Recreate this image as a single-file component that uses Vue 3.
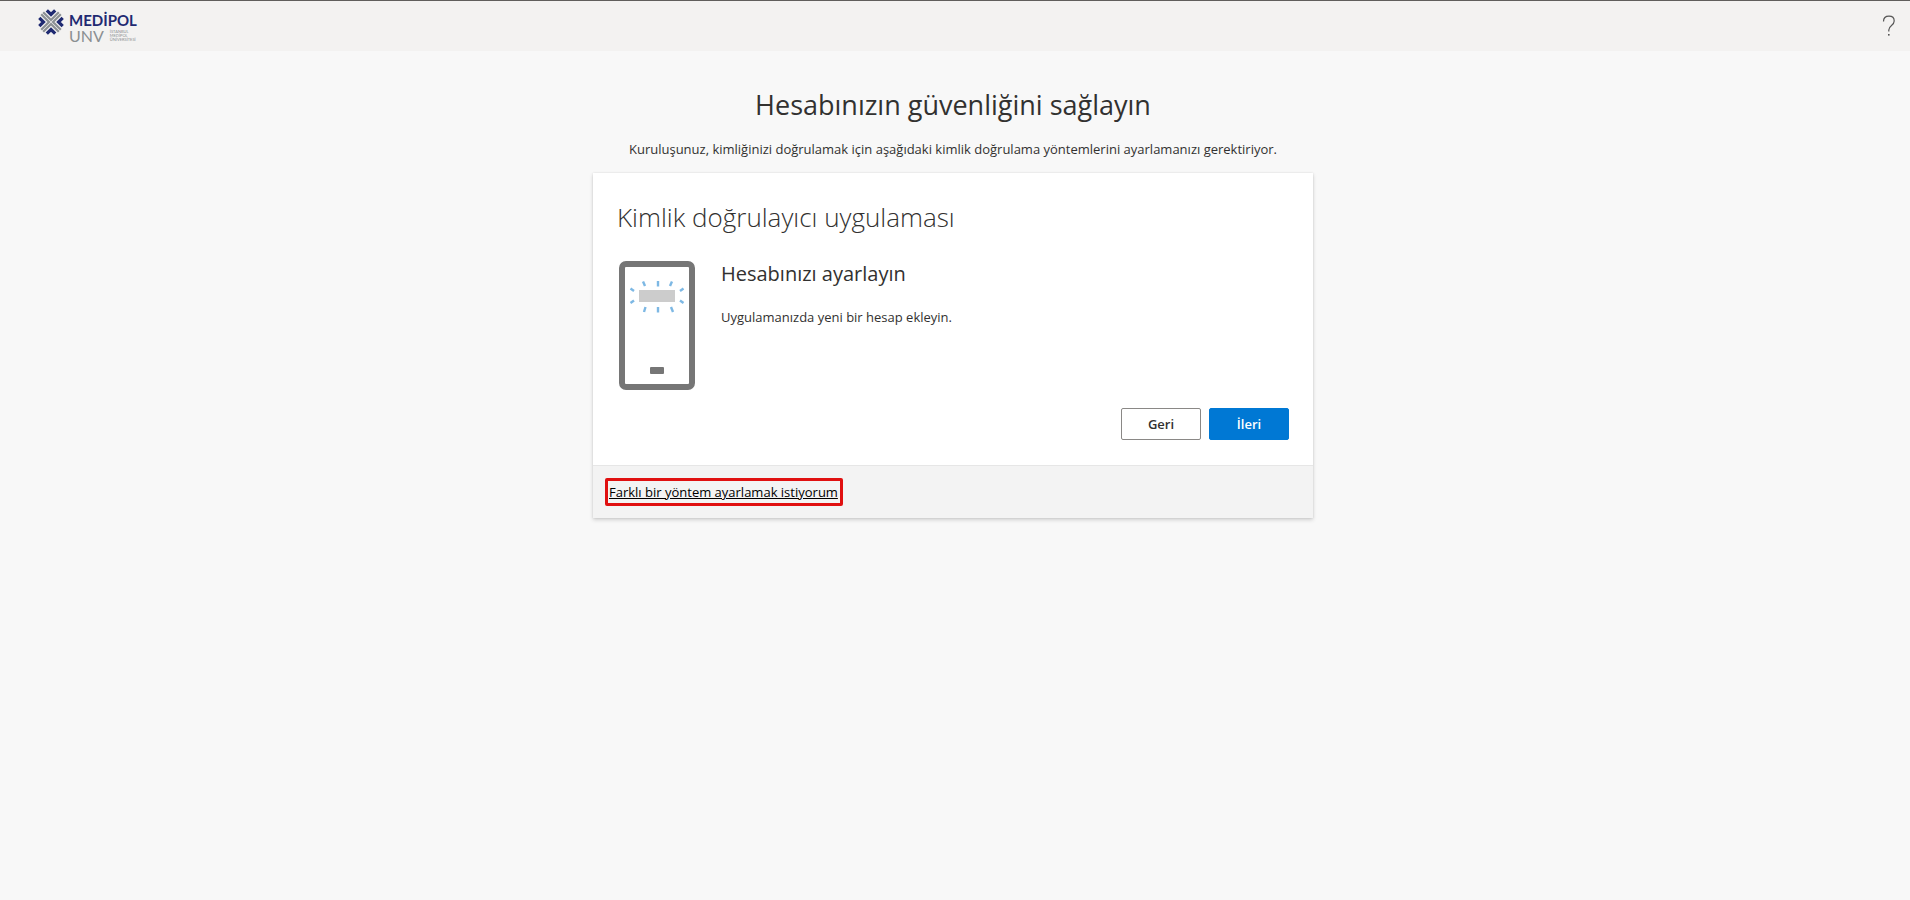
<script setup>
const quadrants = [0, 90, 180, 270]
const rays = [
  'M25 21.500l2 4.500', 'M40 21v5.500', 'M54 21.500l-2 4.500',
  'M12.500 28.500l3.500 2.500', 'M65.500 28.500l-3.500 2.500',
  'M12.500 43l3.500-2.500', 'M65.500 43l-3.500-2.500',
  'M26 52l1.500-5', 'M40 52.500v-5.500', 'M55 52l-2-5',
]
</script>

<template>
  <div class="page">
    <header class="topbar">
      <div class="brand">
        <svg class="emblem" viewBox="0 0 26 26" aria-hidden="true">
          <g v-for="a in quadrants" :key="a" :transform="`rotate(${a} 13 13)`" fill="none">
            <path d="M5.200 3.200L13 11L20.800 3.200" stroke="#8b9094" stroke-width="2.200" />
            <path d="M8.800 1.300L13 5.500L17.200 1.300" stroke="#1f2a72" stroke-width="3.200" />
          </g>
        </svg>
        <div class="wordmark">
          <span class="name">MEDİPOL</span>
          <div class="second">
            <span class="unv">UNV</span>
            <span class="tiny">İSTANBUL<br />MEDİPOL<br />ÜNİVERSİTESİ</span>
          </div>
        </div>
      </div>
      <button class="help" type="button" aria-label="Yardım">
        <svg viewBox="0 0 14 22" aria-hidden="true">
          <path d="M1.500 6.500C1.500 3 4 1.200 7 1.200S12.200 3 12.200 6C12.200 10.500 6.800 10.500 6.800 15V16.500" fill="none" stroke="#555" stroke-width="1.200" />
          <rect x="6" y="19" width="1.600" height="1.600" fill="#555" />
        </svg>
      </button>
    </header>

    <main class="content">
      <h1>Hesabınızın güvenliğini sağlayın</h1>
      <p class="lead">Kuruluşunuz, kimliğinizi doğrulamak için aşağıdaki kimlik doğrulama yöntemlerini ayarlamanızı gerektiriyor.</p>
      <section class="card">
        <div class="body">
          <h2>Kimlik doğrulayıcı uygulaması</h2>
          <div class="step">
            <svg class="phone" viewBox="0 0 78 130" aria-hidden="true">
              <rect x="4" y="4" width="70" height="123" rx="4" fill="#fff" stroke="#767676" stroke-width="6" />
              <rect x="21" y="30" width="36" height="12" fill="#ccc" />
              <rect x="32" y="107" width="14" height="7" rx="1" fill="#767676" />
              <path v-for="r in rays" :key="r" :d="r" stroke="#7db8e4" stroke-width="2.400" />
            </svg>
            <div>
              <h3>Hesabınızı ayarlayın</h3>
              <p>Uygulamanızda yeni bir hesap ekleyin.</p>
            </div>
          </div>
          <div class="actions">
            <button type="button">Geri</button>
            <button type="button" class="primary">İleri</button>
          </div>
        </div>
        <footer class="foot">
          <a href="#">Farklı bir yöntem ayarlamak istiyorum</a>
        </footer>
      </section>
    </main>
  </div>
</template>

<style>
html, body { margin: 0; background: #f8f8f8; }
</style>

<style scoped>
.page {
  min-height: 100vh;
  box-sizing: border-box;
  background: #f8f8f8;
  color: #323130;
  font: 13px/20px "Open Sans", "Noto Sans", sans-serif;
}
.topbar {
  display: flex;
  justify-content: space-between;
  align-items: center;
  height: 51px;
  box-sizing: border-box;
  padding: 0 12px 0 38px;
  border-top: 1px solid #605e5c;
  background: #f3f2f1;
}
.brand { display: flex; gap: 5px; height: 34px; }
.emblem { width: 26px; height: 26px; }
.wordmark { color: #1f2a72; padding-top: 3px; }
.name { display: block; font: 700 15px/16px Lato, sans-serif; }
.second { display: flex; gap: 6px; align-items: center; color: #8b8f92; }
.unv { font: 400 16px/16px Lato, sans-serif; }
.tiny { font: 400 4px/4px Lato, sans-serif; }
.help { width: 16px; height: 24px; padding: 0; border: 0; background: none; }
.help svg { display: block; width: 14px; height: 22px; }
.content {
  display: flex;
  flex-direction: column;
  align-items: center;
  padding: 36px 4px 0 0;
}
h1, h2, h3, p { margin: 0; }
h1 { font-size: 27px; line-height: 36px; font-weight: 400; }
.lead { margin: 16px 0 14px; }
.card {
  width: 720px;
  max-width: 100%;
  background: #fff;
  box-shadow: 0 2px 4px rgba(0, 0, 0, .16), 0 0 2px rgba(0, 0, 0, .1);
}
.body { padding: 26px 24px 25px; }
h2 { font-size: 26px; line-height: 36px; font-weight: 300; }
.step { display: flex; gap: 25px; margin-top: 25px; }
.phone { flex: none; width: 78px; height: 130px; margin-left: 1px; }
h3 { font-size: 20px; line-height: 28px; font-weight: 400; }
.step p { margin-top: 19px; }
.actions { display: flex; justify-content: flex-end; gap: 8px; margin-top: 18px; }
.actions button {
  min-width: 80px;
  height: 32px;
  padding: 0 16px;
  border: 1px solid #8a8886;
  border-radius: 2px;
  background: #fff;
  color: #323130;
  font: 600 13px/20px "Open Sans", sans-serif;
}
.actions .primary { border-color: #0078d4; background: #0078d4; color: #fff; }
.foot {
  padding: 12px;
  border-top: 1px solid #e6e6e6;
  background: #f3f3f3;
}
.foot a {
  display: block;
  width: fit-content;
  padding: 1px 2px 1px 1px;
  border: 3px solid #e01010;
  border-radius: 2px;
  color: #000;
  text-decoration: underline;
}
</style>
